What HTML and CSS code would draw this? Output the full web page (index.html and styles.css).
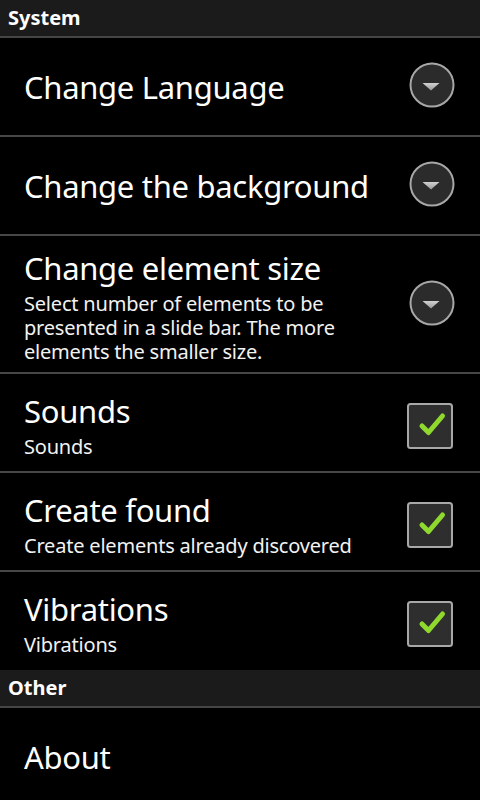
FILE: index.html
```html
<!DOCTYPE html>
<html>
<head>
<meta charset="utf-8">
<link rel="stylesheet" href="styles.css">
</head>
<body>
<div class="screen">
  <div class="cat">System</div>

  <div class="pref">
    <div class="texts"><div class="title">Change Language</div></div>
    <div class="widget"><svg class="spin" width="46" height="46" viewBox="0 0 46 46"><defs><linearGradient id="tg" x1="0" y1="0" x2="0" y2="1"><stop offset="0" stop-color="#d0d0d0"/><stop offset="1" stop-color="#9a9a9a"/></linearGradient></defs><circle cx="23" cy="23" r="21.5" fill="#2b2b2b" stroke="#a8a8a8" stroke-width="2"/><path d="M13.5 21 L30.5 21 L22 28.5 Z" fill="url(#tg)"/></svg></div>
  </div>
  <div class="pref">
    <div class="texts"><div class="title">Change the background</div></div>
    <div class="widget"><svg class="spin" width="46" height="46" viewBox="0 0 46 46"><circle cx="23" cy="23" r="21.5" fill="#2b2b2b" stroke="#a8a8a8" stroke-width="2"/><path d="M13.5 21 L30.5 21 L22 28.5 Z" fill="url(#tg)"/></svg></div>
  </div>
  <div class="pref">
    <div class="texts"><div class="title">Change element size</div><div class="sum">Select number of elements to be presented in a slide bar. The more elements the smaller size.</div></div>
    <div class="widget"><svg class="spin" width="46" height="46" viewBox="0 0 46 46"><circle cx="23" cy="23" r="21.5" fill="#2b2b2b" stroke="#a8a8a8" stroke-width="2"/><path d="M13.5 21 L30.5 21 L22 28.5 Z" fill="url(#tg)"/></svg></div>
  </div>
  <div class="pref">
    <div class="texts"><div class="title">Sounds</div><div class="sum">Sounds</div></div>
    <div class="widget"><svg class="chk" width="46" height="46" viewBox="0 0 46 46"><rect x="1" y="1" width="44" height="44" rx="2.5" fill="#2e2e2e" stroke="#a8a8a8" stroke-width="2"/><path d="M15 23 L21.5 29.5 L35.5 13" fill="none" stroke="#8fd92e" stroke-width="5" stroke-linecap="round" stroke-linejoin="round"/></svg></div>
  </div>
  <div class="pref">
    <div class="texts"><div class="title">Create found</div><div class="sum">Create elements already discovered</div></div>
    <div class="widget"><svg class="chk" width="46" height="46" viewBox="0 0 46 46"><rect x="1" y="1" width="44" height="44" rx="2.5" fill="#2e2e2e" stroke="#a8a8a8" stroke-width="2"/><path d="M15 23 L21.5 29.5 L35.5 13" fill="none" stroke="#8fd92e" stroke-width="5" stroke-linecap="round" stroke-linejoin="round"/></svg></div>
  </div>
  <div class="pref last">
    <div class="texts"><div class="title">Vibrations</div><div class="sum">Vibrations</div></div>
    <div class="widget"><svg class="chk" width="46" height="46" viewBox="0 0 46 46"><rect x="1" y="1" width="44" height="44" rx="2.5" fill="#2e2e2e" stroke="#a8a8a8" stroke-width="2"/><path d="M15 23 L21.5 29.5 L35.5 13" fill="none" stroke="#8fd92e" stroke-width="5" stroke-linecap="round" stroke-linejoin="round"/></svg></div>
  </div>

  <div class="cat">Other</div>
  <div class="pref last">
    <div class="texts"><div class="title">About</div></div>
  </div>
</div>
</body>
</html>
```

FILE: styles.css
```css
html, body {
  margin: 0;
  padding: 0;
  background: #000;
}
body {
  font-family: "Noto Sans", "Open Sans", "DejaVu Sans", sans-serif;
  color: #fff;
  width: 480px;
  height: 800px;
  overflow: hidden;
}
.screen {
  display: flex;
  flex-direction: column;
}
.cat {
  height: 36px;
  line-height: 36px;
  background: #1b1b1b;
  border-bottom: 2px solid #454545;
  padding-left: 8px;
  font-weight: bold;
  font-size: 20px;
  flex: none;
}
.pref {
  display: flex;
  align-items: center;
  min-height: 99px;
  box-sizing: border-box;
  padding: 8px 0 8px 24px;
  border-bottom: 2px solid #474747;
  flex: none;
}
.pref.last {
  border-bottom: none;
  min-height: 98px;
}
.texts {
  flex: 1;
  min-width: 0;
}
.title {
  font-size: 31px;
  letter-spacing: -0.3px;
  line-height: 48px;
  white-space: nowrap;
}
.sum {
  font-size: 20px;
  letter-spacing: -0.2px;
  line-height: 24px;
  color: #f2f2f2;
  padding-right: 8px;
}
.widget {
  width: 73px;
  flex: none;
  display: flex;
  justify-content: flex-start;
}
.widget svg {
  display: block;
}
.spin {
  margin-left: 2px;
  margin-bottom: 3px;
}
.chk {
  margin-top: 6px;
}
```
